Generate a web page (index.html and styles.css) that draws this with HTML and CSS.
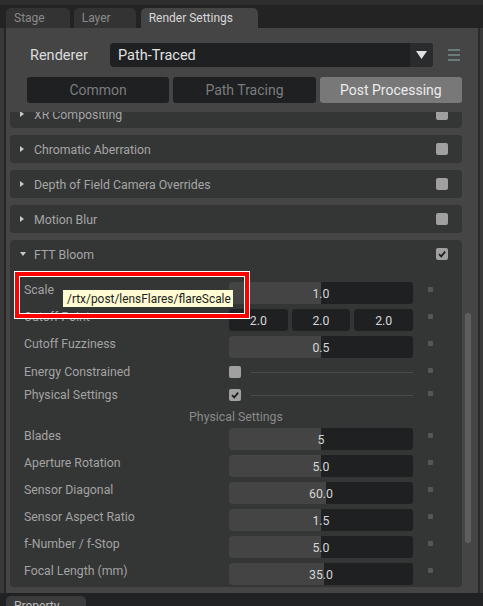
FILE: index.html
```html
<!DOCTYPE html>
<html>
<head>
<meta charset="utf-8">
<link rel="stylesheet" href="styles.css">
</head>
<body>
<div class="topstrip"></div>
<div class="tabbar">
  <div class="tab">Stage</div>
  <div class="tab">Layer</div>
  <div class="tab active">Render Settings</div>
</div>
<div class="window">
  <div class="window-inner">
    <div class="panel">
      <div class="renderer-row">
        <div class="renderer-label">Renderer</div>
        <div class="dropdown">
          <div class="dropdown-value">Path-Traced</div>
          <div class="dropdown-arrow"><svg width="11" height="8" viewBox="0 0 11 8"><polygon points="0,0 11,0 5.5,8" fill="#e2e2e2"/></svg></div>
        </div>
        <svg class="menu-icon" width="12" height="12" viewBox="0 0 12 12"><rect x="0" y="0" width="12" height="2" fill="#6b7a7a"/><rect x="0" y="5" width="12" height="2" fill="#6b7a7a"/><rect x="0" y="10" width="12" height="2" fill="#6b7a7a"/></svg>
      </div>
      <div class="subtabs">
        <div class="subtab">Common</div>
        <div class="subtab">Path Tracing</div>
        <div class="subtab active">Post Processing</div>
      </div>
      <div class="scroll">
        <div class="scroll-viewport">
          <div class="scroll-content">
            <div class="frame">
              <div class="frame-header"><span class="tri-right"></span><span class="frame-title">XR Compositing</span><span class="cb"></span></div>
            </div>
            <div class="frame">
              <div class="frame-header"><span class="tri-right"></span><span class="frame-title">Chromatic Aberration</span><span class="cb"></span></div>
            </div>
            <div class="frame">
              <div class="frame-header"><span class="tri-right"></span><span class="frame-title">Depth of Field Camera Overrides</span><span class="cb"></span></div>
            </div>
            <div class="frame">
              <div class="frame-header"><span class="tri-right"></span><span class="frame-title">Motion Blur</span><span class="cb"></span></div>
            </div>
            <div class="frame">
              <div class="frame-header"><span class="tri-down"></span><span class="frame-title">FTT Bloom</span><span class="cb checked"><svg width="12" height="12" viewBox="0 0 12 12"><polyline points="3,6.2 5.2,8.4 9.2,3.6" fill="none" stroke="#1c1c1c" stroke-width="1.7"/></svg></span></div>
              <div class="frame-body">
                <div class="row">
                  <div class="label">Scale</div>
                  <div class="field"><div class="fill" style="width:92px"></div><div class="value">1.0</div></div>
                  <div class="dot"></div>
                </div>
                <div class="row">
                  <div class="label">Cutoff Point</div>
                  <div class="triple">
                    <div class="subfield">2.0</div>
                    <div class="subfield">2.0</div>
                    <div class="subfield">2.0</div>
                  </div>
                  <div class="dot"></div>
                </div>
                <div class="row">
                  <div class="label">Cutoff Fuzziness</div>
                  <div class="field"><div class="fill" style="width:92px"></div><div class="value">0.5</div></div>
                  <div class="dot"></div>
                </div>
                <div class="row cb-row">
                  <div class="label">Energy Constrained</div>
                  <div class="cb-control"><span class="cb"></span><span class="cb-line"></span></div>
                  <div class="dot"></div>
                </div>
                <div class="row cb-row">
                  <div class="label">Physical Settings</div>
                  <div class="cb-control"><span class="cb checked"><svg width="12" height="12" viewBox="0 0 12 12"><polyline points="3,6.2 5.2,8.4 9.2,3.6" fill="none" stroke="#1c1c1c" stroke-width="1.7"/></svg></span><span class="cb-line"></span></div>
                  <div class="dot"></div>
                </div>
                <div class="section-title">Physical Settings</div>
                <div class="row">
                  <div class="label">Blades</div>
                  <div class="field"><div class="fill" style="width:92px"></div><div class="value">5</div></div>
                  <div class="dot"></div>
                </div>
                <div class="row">
                  <div class="label">Aperture Rotation</div>
                  <div class="field"><div class="fill" style="width:92px"></div><div class="value">5.0</div></div>
                  <div class="dot"></div>
                </div>
                <div class="row">
                  <div class="label">Sensor Diagonal</div>
                  <div class="field"><div class="fill" style="width:97px"></div><div class="value">60.0</div></div>
                  <div class="dot"></div>
                </div>
                <div class="row">
                  <div class="label">Sensor Aspect Ratio</div>
                  <div class="field"><div class="fill" style="width:92px"></div><div class="value">1.5</div></div>
                  <div class="dot"></div>
                </div>
                <div class="row">
                  <div class="label">f-Number / f-Stop</div>
                  <div class="field"><div class="fill" style="width:92px"></div><div class="value">5.0</div></div>
                  <div class="dot"></div>
                </div>
                <div class="row">
                  <div class="label">Focal Length (mm)</div>
                  <div class="field"><div class="fill" style="width:95px"></div><div class="value">35.0</div></div>
                  <div class="dot"></div>
                </div>
              </div>
            </div>
          </div>
        </div>
        <div class="scrollbar"><div class="thumb"></div></div>
      </div>
    </div>
  </div>
</div>
<div class="bottombar">
  <div class="bottom-tab">Property</div>
</div>
<div class="highlight"></div>
<div class="tooltip">/rtx/post/lensFlares/flareScale</div>
</body>
</html>
```

FILE: styles.css
```css
* { box-sizing: border-box; }
html, body { margin: 0; padding: 0; }
body {
  width: 483px;
  height: 606px;
  overflow: hidden;
  position: relative;
  background: #232323;
  font-family: Roboto, "Noto Sans", sans-serif;
  font-size: 12.3px;
  color: #a3a3a3;
}
.topstrip { height: 5px; background: #2e2e2e; }
.tabbar {
  height: 23px;
  display: flex;
  align-items: flex-end;
  gap: 4px;
  padding-left: 6px;
}
.tab {
  height: 20px;
  padding: 0 25px 0 8px;
  display: flex;
  align-items: center;
  background: #333333;
  color: #8a8a8a;
  border-radius: 5px 5px 0 0;
  font-size: 12px;
}
.tab.active { background: #454545; color: #d8d8d8; margin-left: 1px; }

.window {
  display: flex;
  height: 565px;
  background: #393939;
  padding-left: 4px;
  padding-right: 3px;
}
.window-inner {
  flex: 1;
  display: flex;
  border-left: 2px solid #262626;
  border-right: 2px solid #28292b;
}
.panel {
  flex: 1;
  background: #454545;
  padding: 15px 0 6px 0;
  display: flex;
  flex-direction: column;
}
.renderer-row {
  display: flex;
  align-items: center;
  height: 24px;
  padding-left: 24px;
}
.renderer-label { width: 80px; font-size: 14.5px; color: #dcdcdc; }
.dropdown {
  width: 323px;
  height: 24px;
  background: #1f2022;
  border-radius: 4px;
  display: flex;
  align-items: center;
}
.dropdown-value { flex: 1; padding-left: 8px; font-size: 14.5px; color: #e2e2e2; }
.dropdown-arrow {
  width: 23px;
  height: 100%;
  background: #2a2b2d;
  border-radius: 0 4px 4px 0;
  display: flex;
  align-items: center;
  justify-content: center;
}
.menu-icon { margin-left: 15px; }

.subtabs {
  margin: 10px 16px 0 21px;
  display: grid;
  grid-template-columns: repeat(3, 1fr);
  gap: 4px;
  height: 26px;
}
.subtab {
  background: #1f2022;
  color: #7c7c7c;
  border-radius: 3px;
  font-size: 14px;
  display: flex;
  align-items: center;
  justify-content: center;
}
.subtab.active { background: #787878; color: #ececec; }

.scroll { margin-top: 9px; height: 475px; display: flex; }
.scroll-viewport { width: 456px; padding-left: 4px; overflow: hidden; }
.scroll-content {
  margin-top: -12px;
  display: flex;
  flex-direction: column;
  gap: 7px;
}
.scrollbar { width: 16px; padding: 201px 0 0 3px; }
.thumb { width: 6px; height: 230px; background: #5e5e5e; border-radius: 3px; }

.frame { background: #343535; border-radius: 4px; }
.frame-header {
  height: 28px;
  display: flex;
  align-items: center;
  padding: 0 14px 0 10px;
  color: #a6a6a6;
}
.tri-right {
  width: 0; height: 0;
  border-top: 3px solid transparent;
  border-bottom: 3px solid transparent;
  border-left: 4px solid #c8c8c8;
  margin-right: 10px;
}
.tri-down {
  width: 0; height: 0;
  border-left: 3px solid transparent;
  border-right: 3px solid transparent;
  border-top: 4px solid #c8c8c8;
  margin-right: 8px;
}
.frame-title { flex: 1; padding-top: 2px; }
.cb {
  width: 12px;
  height: 12px;
  background: #a0a0a0;
  border-radius: 2px;
  display: block;
  flex: none;
}
.cb svg { display: block; }

.frame-body {
  padding: 14px 0 2px 14px;
  display: flex;
  flex-direction: column;
  gap: 5px;
}
.row { display: flex; align-items: flex-start; height: 22px; }
.label { width: 205px; line-height: 14px; padding-top: 1px; color: #a3a3a3; white-space: nowrap; }
.field {
  width: 184px;
  height: 22px;
  background: #1f2022;
  border-radius: 3px;
  overflow: hidden;
  display: grid;
}
.field > * { grid-area: 1 / 1; }
.fill { background: #444444; height: 22px; }
.value {
  align-self: center;
  justify-self: center;
  color: #d6d6d6;
  line-height: 14px;
  padding-top: 1px;
}
.triple {
  width: 184px;
  display: grid;
  grid-template-columns: repeat(3, 1fr);
  gap: 4px;
}
.subfield {
  height: 22px;
  background: #1f2022;
  border-radius: 3px;
  color: #d6d6d6;
  display: flex;
  align-items: center;
  justify-content: center;
  padding-top: 1px;
}
.dot {
  width: 5px;
  height: 5px;
  margin: 5px 0 0 15px;
  background: #575757;
  border-radius: 1px;
}
.row.cb-row { height: 18px; }
.cb-row .label { padding-top: 2px; }
.cb-control { width: 184px; display: flex; align-items: flex-start; }
.cb-control .cb { margin-top: 3px; }
.cb-line { flex: 1; height: 1px; margin: 9px 0 0 10px; background: #4a4a4a; }
.section-title {
  height: 14px;
  line-height: 17px;
  margin-left: -14px;
  text-align: center;
  color: #8b8b8b;
}

.bottombar { height: 13px; background: #212224; padding: 3px 0 0 6px; overflow: hidden; }
.bottom-tab {
  width: 80px;
  height: 20px;
  background: #3b3b3b;
  border-radius: 5px 5px 0 0;
  padding-left: 8px;
  line-height: 20px;
  font-size: 12px;
  color: #bdbdbd;
}

.highlight {
  position: absolute;
  left: 14px;
  top: 271px;
  width: 236px;
  height: 48px;
  border: 1px solid #ffffff;
  box-shadow: inset 0 0 0 4px #ff0000, inset 0 0 0 5px #ffffff;
}
.tooltip {
  position: absolute;
  left: 63px;
  top: 290px;
  height: 17px;
  line-height: 18px;
  padding: 0 2px 0 4px;
  font-size: 11.9px;
  background: #fffbd2;
  color: #1e1e1e;
  white-space: nowrap;
}
```
